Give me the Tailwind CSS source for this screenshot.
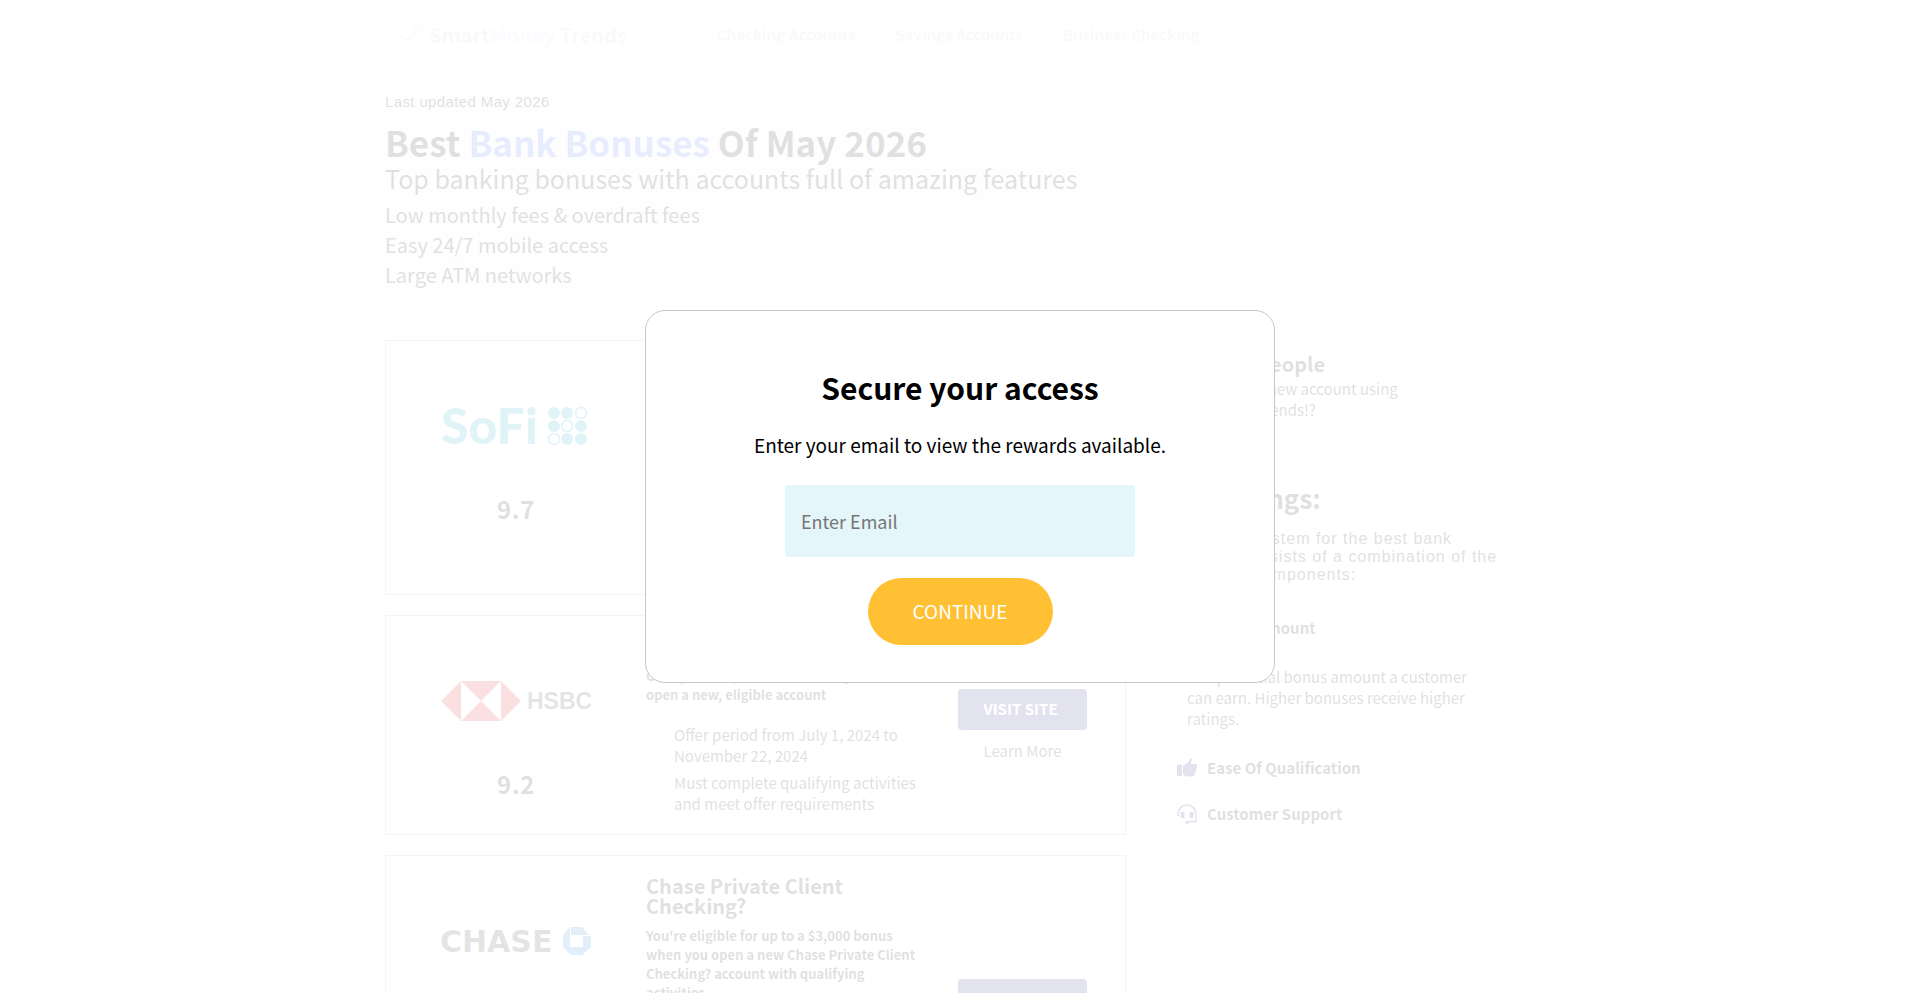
<!DOCTYPE html>
<html lang="en">
<head>
  <meta charset="UTF-8" />
  <meta name="viewport" content="width=device-width, initial-scale=1" />
  <title>Best Bank Bonuses</title>
  <script src="https://cdn.jsdelivr.net/npm/@tailwindcss/browser@4"></script>
</head>
<body class="h-screen overflow-hidden bg-white text-black font-['Noto_Sans_CJK_SC','Noto_Sans',sans-serif]">

  <!-- Header -->
  <header class="h-20">
    <div class="max-w-[1150px] mx-auto h-[70px] flex items-center opacity-20">
      <a href="#" class="flex items-center gap-1 pl-1 w-[332px] text-xl font-bold">
        <svg class="w-9 h-6" viewBox="0 0 40 28" fill="none" stroke="#5b7cff" stroke-width="3"><path d="M1 25 12 15 20 20 36 4M26 3h11v10" /></svg>
        <span>Smart<span class="text-[#5b7cff]">Money</span> Trends</span>
      </a>
      <nav class="flex gap-10 text-[15px] font-bold">
        <a href="#">Checking Accounts</a>
        <a href="#">Savings Accounts</a>
        <a href="#">Business Checking</a>
      </nav>
    </div>
  </header>

  <!-- Hero -->
  <section class="bg-[#f4f4f4] h-[222px]">
    <div class="max-w-[1150px] mx-auto pt-3">
      <p class="font-['Liberation_Sans',sans-serif] text-[15px] leading-5 tracking-wide">Last updated May 2026</p>
      <h1 class="mt-2.5 text-[35px] leading-10 font-bold">Best <span class="text-[#4361ff]">Bank Bonuses</span> Of May 2026</h1>
      <h2 class="text-[25px] leading-8">Top banking bonuses with accounts full of amazing features</h2>
      <ul class="mt-1.5 text-xl leading-[30px]">
        <li>Low monthly fees &amp; overdraft fees</li>
        <li>Easy 24/7 mobile access</li>
        <li>Large ATM networks</li>
      </ul>
    </div>
  </section>

  <main class="max-w-[1150px] mx-auto pt-[38px] flex gap-[51px]">
    <!-- Offers -->
    <div class="w-[741px] shrink-0 space-y-5">
      <article class="border border-gray-400 h-[255px] flex">
        <div class="w-[260px] pt-[65px] flex flex-col items-center">
          <svg class="w-[150px] h-10" viewBox="0 0 150 40" fill="#00a2c7" role="img" aria-label="SoFi">
            <text x="0" y="38" font-family="Lato" font-weight="900" font-size="50">SoFi</text>
            <circle cx="113" cy="7" r="6" /><circle cx="126" cy="7" r="6" />
            <circle cx="113" cy="20" r="6" /><circle cx="140" cy="20" r="6" />
            <circle cx="126" cy="33" r="6" /><circle cx="140" cy="33" r="6" />
            <g fill="none" stroke="#00a2c7" stroke-width="1.500"><circle cx="140" cy="7" r="5.500" /><circle cx="126" cy="20" r="5.500" /><circle cx="113" cy="33" r="5.500" /></g>
          </svg>
          <p class="mt-[47px] text-2xl leading-8 font-bold tracking-wide">9.7</p>
        </div>
        <div class="w-[274px] pt-5">
          <h3 class="text-xl leading-5 font-bold">SoFi Checking and Savings</h3>
          <p class="mt-2.5 text-[13px] leading-[19px] font-bold">Earn up to a $300 bonus with direct deposit</p>
        </div>
        <div class="flex-1 flex flex-col items-center pt-[73px]">
          <button class="w-[129px] h-[41px] pr-1 rounded-sm bg-[#1c1c7c] text-white text-[15px] font-bold">VISIT SITE</button>
          <a href="#" class="mt-2.5 text-[15px] leading-[21px]">Learn More</a>
        </div>
      </article>

      <article class="border border-gray-400 h-[220px] flex">
        <div class="w-[260px] pt-[65px] flex flex-col items-center">
          <svg class="w-[150px] h-10" viewBox="0 0 150 40" role="img" aria-label="HSBC">
            <path d="M20 0h40v40H20zM20 0 0 20 20 40zM60 0l20 20-20 20z" fill="#db0011" />
            <path d="M20 0v40L60 0v40z" fill="#fff" />
            <text x="86" y="28" font-family="Liberation Sans" font-weight="700" font-size="23" fill="#222">HSBC</text>
          </svg>
          <p class="mt-[47px] text-2xl leading-8 font-bold tracking-wide">9.2</p>
        </div>
        <div class="w-[274px] pt-5">
          <h3 class="text-xl leading-5 font-bold">HSBC Premier</h3>
          <p class="mt-2.5 text-[13px] leading-[19px] font-bold">Get up to a $2,500 bonus when you<br />open a new, eligible account</p>
          <ul class="mt-5 pl-7 space-y-1.5 text-[15px] leading-[21px]">
            <li>Offer period from July 1, 2024 to November 22, 2024</li>
            <li>Must complete qualifying activities and meet offer requirements</li>
          </ul>
        </div>
        <div class="flex-1 flex flex-col items-center pt-[73px]">
          <button class="w-[129px] h-[41px] pr-1 rounded-sm bg-[#1c1c7c] text-white text-[15px] font-bold">VISIT SITE</button>
          <a href="#" class="mt-2.5 text-[15px] leading-[21px]">Learn More</a>
        </div>
      </article>

      <article class="border border-gray-400 h-[300px] flex">
        <div class="w-[260px] pt-[65px] flex flex-col items-center">
          <svg class="w-[150px] h-10" viewBox="0 0 150 40" role="img" aria-label="Chase">
            <text x="-1" y="31" font-family="DejaVu Sans" font-weight="700" font-size="30" fill="#222">CHASE</text>
            <g fill="#1270c8">
              <path d="M130 6h11l7 8h-18zM150 15v11l-8 7V15zM149 27l-8 7h-11v-8h19zM122 14l7-8v18h-7z" />
              <path d="M122 15h7v11h13v8h-12l-8-8z" />
            </g>
            <path d="M130 15h11v10h-11z" fill="#fff" />
          </svg>
          <p class="mt-[47px] text-2xl leading-8 font-bold tracking-wide">9.0</p>
        </div>
        <div class="w-[274px] pt-5">
          <h3 class="text-xl leading-5 font-bold">Chase Private Client Checking?</h3>
          <p class="mt-2.5 text-[13px] leading-[19px] font-bold">You're eligible for up to a $3,000 bonus when you open a new Chase Private Client Checking? account with qualifying activities</p>
        </div>
        <div class="flex-1 flex flex-col items-center pt-[123px]">
          <button class="w-[129px] h-[41px] pr-1 rounded-sm bg-[#1c1c7c] text-white text-[15px] font-bold">VISIT SITE</button>
          <a href="#" class="mt-2.5 text-[15px] leading-[21px]">Learn More</a>
        </div>
      </article>
    </div>

    <!-- Sidebar -->
    <aside class="flex-1 pt-2.5">
      <div class="pl-[22px]">
        <h3 class="text-xl leading-7 font-bold">5,000 People</h3>
        <p class="text-[15px] leading-[21px]">opened a new account using<br />Savings Trends!?</p>
      </div>
      <h3 class="mt-[58px] text-[26px] leading-10 font-bold">All Ratings:</h3>
      <p class="mt-3 font-['Liberation_Sans',sans-serif] text-base leading-[18px] tracking-[1px]">Its rating system for the best bank<br />options consists of a combination of the following components:</p>
      <h4 class="mt-8 pl-[30px] text-[15px] leading-6 font-bold">Bonus Amount</h4>
      <p class="mt-[26px] pl-2.5 pr-12 text-[15px] leading-[21px]">The potential bonus amount a customer can earn. Higher bonuses receive higher ratings.</p>
      <h4 class="mt-[27px] flex items-center gap-2.5 text-[15px] leading-6 font-bold">
        <svg class="size-5" viewBox="0 0 20 20" fill="#1c1c7c"><path d="M0 6.500h5V18H0zM6 8l6-4.500 1-3.500c1.800.2 2 1.500 1.500 3L13.500 6H19c1.200 0 1.300 1 1 2.500l-2 7.500c-.5 1.500-1.500 2.500-3 2.500H9L6 16z" /></svg>
        Ease Of Qualification
      </h4>
      <h4 class="mt-[22px] flex items-center gap-2.5 text-[15px] leading-6 font-bold">
        <svg class="size-5" viewBox="0 0 20 20" fill="none" stroke="#1c1c7c" stroke-width="1.500"><path d="M1 12v-2a9 9 0 0 1 18 0v7.500H11" /><path d="M8 18.500h4" stroke-width="2.500" /><path d="M5.500 8v6M14.500 8v6" stroke-width="4" /></svg>
        Customer Support
      </h4>
    </aside>
  </main>

  <!-- Email popup -->
  <div class="fixed inset-0 bg-white/88 flex items-center justify-center">
    <form class="w-[630px] h-[373px] bg-white border border-[#c8c8c8] rounded-[20px] flex flex-col items-center pt-[54px]" onsubmit="return false">
      <h2 class="text-3xl leading-[44px] font-bold">Secure your access</h2>
      <label for="email" class="mt-[21px] text-[19px] leading-[30px]">Enter your email to view the rewards available.</label>
      <input id="email" type="email" placeholder="Enter Email" class="mt-[25px] w-[350px] h-[72px] px-4 rounded bg-[#e4f6fa] text-lg outline-none placeholder:text-[#757575]" />
      <button class="mt-[21px] w-[185px] h-[67px] rounded-full bg-[#ffc033] text-white text-[19px]">CONTINUE</button>
    </form>
  </div>
</body>
</html>
